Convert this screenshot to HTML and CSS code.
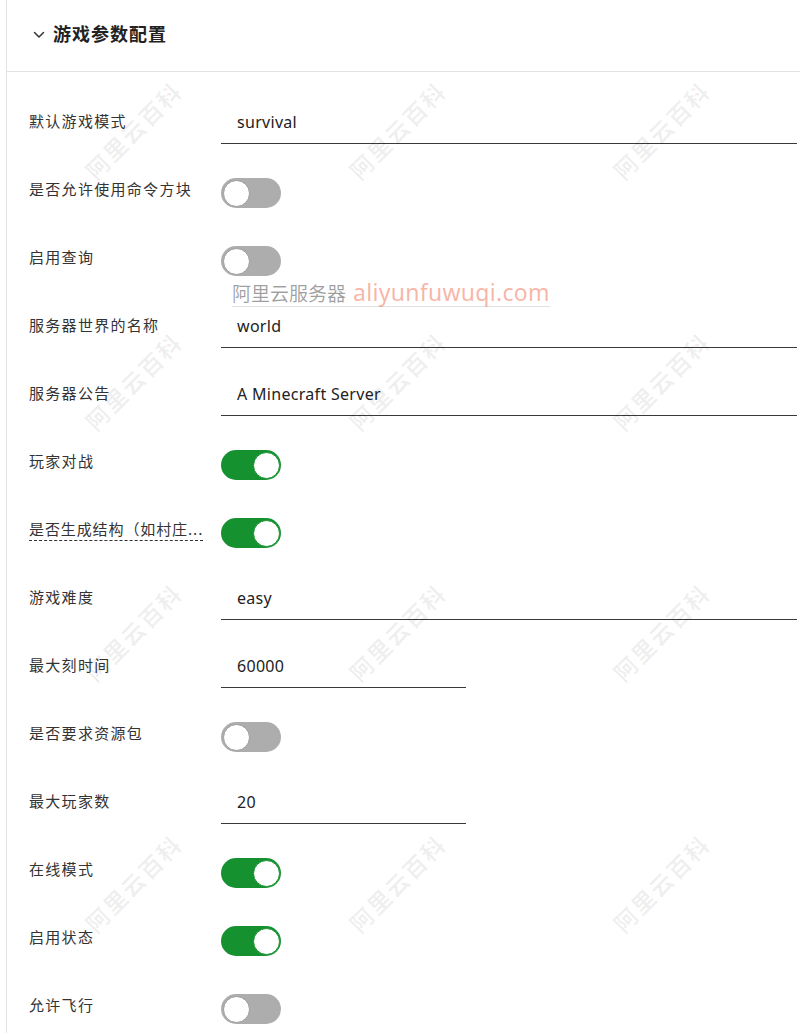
FILE: index.html
```html
<!DOCTYPE html>
<html lang="zh-CN">
<head>
<meta charset="utf-8">
<title>游戏参数配置</title>
<link rel="stylesheet" href="styles.css">
</head>
<body>
<div class="panel">
  <div class="panel-head">
    <svg class="chevron" width="12" height="8" viewBox="0 0 12 8"><polyline points="1.5,1.5 6,6 10.5,1.5" fill="none" stroke="#333" stroke-width="1.5" stroke-linecap="round" stroke-linejoin="round"/></svg>
    <span class="title">游戏参数配置</span>
  </div>
  <div class="form">
    <div class="row"><span class="lbl">默认游戏模式</span><div class="field full"><span class="val">survival</span></div></div>
    <div class="row"><span class="lbl">是否允许使用命令方块</span><div class="switch"><span class="knob"></span></div></div>
    <div class="row"><span class="lbl">启用查询</span><div class="switch"><span class="knob"></span></div></div>
    <div class="row"><span class="lbl">服务器世界的名称</span><div class="field full"><span class="val">world</span></div></div>
    <div class="row"><span class="lbl">服务器公告</span><div class="field full"><span class="val">A Minecraft Server</span></div></div>
    <div class="row"><span class="lbl">玩家对战</span><div class="switch on"><span class="knob"></span></div></div>
    <div class="row"><span class="lbl"><span class="trunc">是否生成结构（如村庄...</span></span><div class="switch on"><span class="knob"></span></div></div>
    <div class="row"><span class="lbl">游戏难度</span><div class="field full"><span class="val">easy</span></div></div>
    <div class="row"><span class="lbl">最大刻时间</span><div class="field short"><span class="val">60000</span></div></div>
    <div class="row"><span class="lbl">是否要求资源包</span><div class="switch"><span class="knob"></span></div></div>
    <div class="row"><span class="lbl">最大玩家数</span><div class="field short"><span class="val">20</span></div></div>
    <div class="row"><span class="lbl">在线模式</span><div class="switch on"><span class="knob"></span></div></div>
    <div class="row"><span class="lbl">启用状态</span><div class="switch on"><span class="knob"></span></div></div>
    <div class="row"><span class="lbl">允许飞行</span><div class="switch"><span class="knob"></span></div></div>
  </div>
</div>
<div class="wm-layer">
  <span class="wm" style="left:133px;top:130px">阿里云百科</span>
  <span class="wm" style="left:397px;top:130px">阿里云百科</span>
  <span class="wm" style="left:661px;top:130px">阿里云百科</span>
  <span class="wm" style="left:133px;top:381px">阿里云百科</span>
  <span class="wm" style="left:397px;top:381px">阿里云百科</span>
  <span class="wm" style="left:661px;top:381px">阿里云百科</span>
  <span class="wm" style="left:133px;top:632px">阿里云百科</span>
  <span class="wm" style="left:397px;top:632px">阿里云百科</span>
  <span class="wm" style="left:661px;top:632px">阿里云百科</span>
  <span class="wm" style="left:133px;top:883px">阿里云百科</span>
  <span class="wm" style="left:397px;top:883px">阿里云百科</span>
  <span class="wm" style="left:661px;top:883px">阿里云百科</span>
  <div class="brand"><span class="brand-cn">阿里云服务器</span><span class="brand-url">aliyunfuwuqi.com</span></div>
</div>
</body>
</html>
```
FILE: styles.css
```css
html, body {
  margin: 0;
  padding: 0;
  background: #fff;
}
body {
  font-family: "Noto Sans", "Noto Sans CJK SC", sans-serif;
  color: #333;
  position: relative;
  height: 1033px;
  overflow: hidden;
}
.panel {
  margin-left: 6px;
  border-left: 1px solid #e3e3e3;
  min-height: 1033px;
}
.panel-head {
  height: 71px;
  border-bottom: 1px solid #e2e2e2;
  display: flex;
  align-items: center;
  padding-left: 26px;
  gap: 8px;
}
.chevron {
  display: block;
  margin-top: -2px;
}
.title {
  font-family: "Noto Sans CJK SC", sans-serif;
  font-size: 18px;
  font-weight: 600;
  letter-spacing: 1px;
  color: #222;
  margin-top: -5px;
}
.form {
  padding-top: 17px;
  padding-left: 22px;
}
.row {
  height: 68px;
  display: flex;
  align-items: center;
}
.lbl {
  width: 192px;
  flex: none;
  font-family: "Noto Sans CJK SC", sans-serif;
  font-size: 15px;
  letter-spacing: 1.3px;
  color: #333;
  white-space: nowrap;
  margin-top: -6px;
}
.trunc {
  border-bottom: 1px dashed #333;
  padding-bottom: 1px;
  letter-spacing: 0.9px;
}
.field {
  height: 40px;
  border-bottom: 1.5px solid #3a3a3a;
  display: flex;
  align-items: center;
  padding-left: 16px;
  padding-bottom: 3px;
  box-sizing: border-box;
  margin-top: 2px;
}
.field.full { width: 576px; }
.field.short { width: 245px; }
.val {
  font-family: "Noto Sans", sans-serif;
  font-size: 16px;
  color: #222;
  letter-spacing: 0.3px;
}
.switch {
  width: 60px;
  height: 30px;
  border-radius: 15px;
  background: #adadad;
  box-sizing: border-box;
  padding: 1.5px;
  display: flex;
  margin-top: 4px;
}
.switch .knob {
  width: 27px;
  height: 27px;
  border-radius: 50%;
  background: #fff;
  box-sizing: border-box;
  border: 1px solid #9a9a9a;
}
.switch.on {
  background: #16912f;
  justify-content: flex-end;
}
.switch.on .knob {
  border-color: #16912f;
}
.wm-layer {
  position: absolute;
  left: 0;
  top: 0;
  width: 800px;
  height: 1033px;
  pointer-events: none;
}
.wm {
  position: absolute;
  font-family: "Noto Sans CJK SC", sans-serif;
  font-size: 23px;
  font-weight: 700;
  color: rgba(0, 0, 0, 0.065);
  white-space: nowrap;
  transform: translate(-50%, -50%) rotate(-45deg);
  letter-spacing: 2px;
}
.brand {
  position: absolute;
  left: 232px;
  top: 279px;
  line-height: 27px;
  white-space: nowrap;
  border-bottom: 1px solid rgba(0, 0, 0, 0.12);
  display: flex;
  align-items: baseline;
  gap: 7px;
}
.brand-cn {
  font-family: "Noto Sans CJK SC", sans-serif;
  font-size: 19px;
  color: rgba(0, 0, 0, 0.38);
}
.brand-url {
  font-family: "Noto Sans", sans-serif;
  color: rgba(240, 110, 80, 0.5);
  font-size: 23px;
  letter-spacing: 0.3px;
}
```
